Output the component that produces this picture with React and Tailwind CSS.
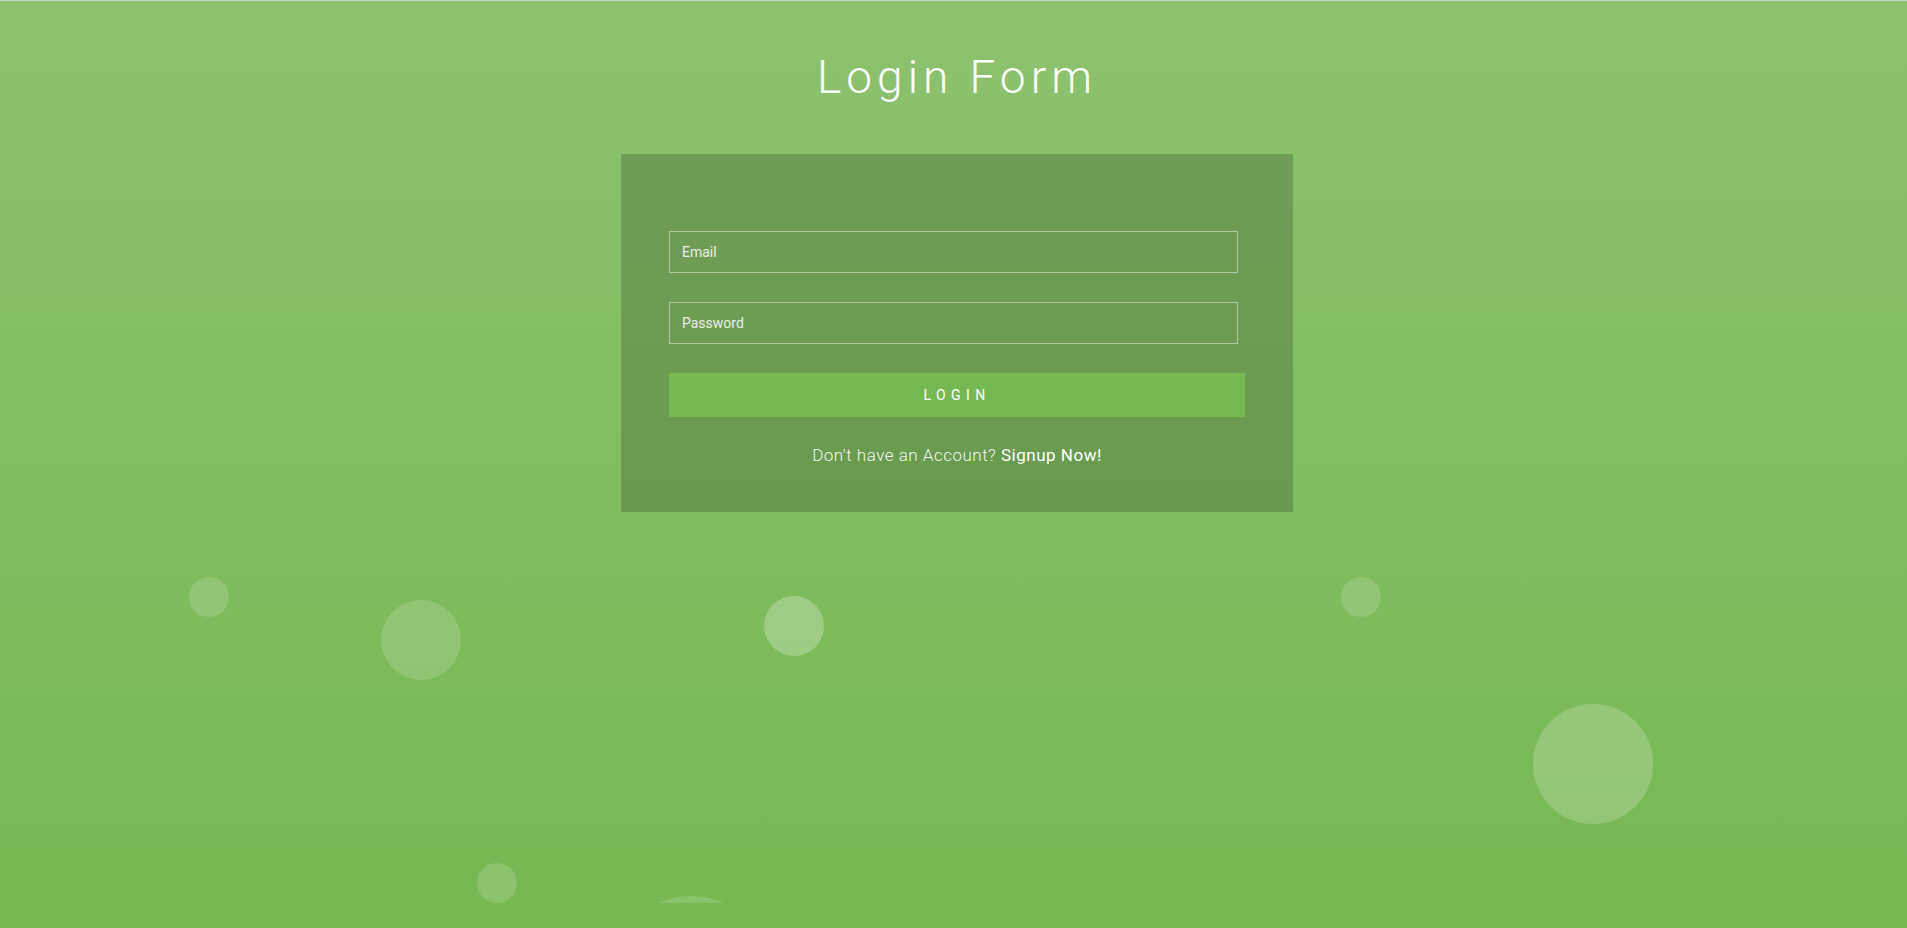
import React from "react";

const bubbles = [
  { c: "left-[189px] top-[577px] w-[40px] h-[40px] bg-white/15" },
  { c: "left-[381px] top-[600px] w-[80px] h-[80px] bg-white/15" },
  { c: "left-[764px] top-[596px] w-[60px] h-[60px] bg-white/25" },
  { c: "left-[1341px] top-[577px] w-[40px] h-[40px] bg-white/15" },
  { c: "left-[1533px] top-[704px] w-[120px] h-[120px] bg-white/20" },
  { c: "left-[477px] top-[863px] w-[40px] h-[40px] bg-white/15" },
  { c: "left-[611px] top-[896px] w-[160px] h-[160px] bg-white/15" },
];

export default function App() {
  return (
    <div
      className="relative w-full h-[928px] overflow-hidden bg-gradient-to-b from-[#8DC26F] to-[#76b852]"
      style={{ fontFamily: "Roboto, 'Noto Sans', sans-serif" }}
    >
      <div className="absolute left-0 top-0 w-full h-[1px] bg-[#c9cfc5]" />
      <div className="absolute left-0 top-0 w-full h-[903px] overflow-hidden pointer-events-none">
        {bubbles.map((b, i) => (
          <div key={i} className={`absolute rounded-full ${b.c}`} />
        ))}
      </div>

      <div className="relative flex flex-col items-center pl-[7px]">
        <h1 className="mt-[54px] text-[46px] leading-none font-light tracking-[5px] text-white">
          Login Form
        </h1>

        <div className="mt-[54px] w-[672px] h-[358px] bg-black/[0.18] pl-[48px] pr-[48px] pt-[77px]">
          <form className="flex flex-col" onSubmit={(e) => e.preventDefault()}>
            <input
              type="text"
              placeholder="Email"
              className="w-[569px] h-[42px] border border-white/45 bg-transparent px-[12px] text-[14px] text-white placeholder:text-white/85 outline-none"
            />
            <input
              type="password"
              placeholder="Password"
              className="mt-[29px] w-[569px] h-[42px] border border-white/45 bg-transparent px-[12px] text-[14px] text-white placeholder:text-white/85 outline-none"
            />
            <button
              type="submit"
              className="mt-[29px] w-[576px] h-[44px] bg-[#76b852] text-white text-[14px] tracking-[5.4px] font-normal"
            >
              LOGIN
            </button>
          </form>
          <p className="mt-[28px] w-[576px] text-center text-[17px] leading-[21px] font-light tracking-[0.5px] text-white/95">
            Don't have an Account?{" "}
            <a href="#" className="font-normal text-white">
              Signup Now!
            </a>
          </p>
        </div>
      </div>
    </div>
  );
}
